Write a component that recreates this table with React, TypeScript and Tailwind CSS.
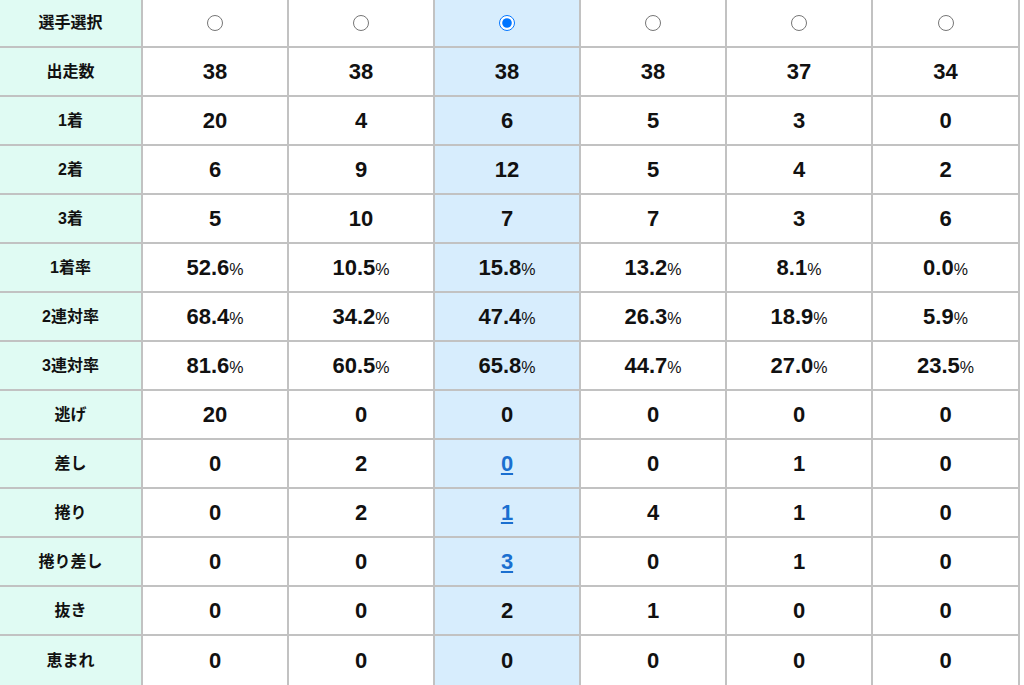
import React, { useState } from "react"

type Cell = string | { link: string }

const rows: { label: string; values: Cell[]; pct?: boolean }[] = [
  { label: "出走数", values: ["38", "38", "38", "38", "37", "34"] },
  { label: "1着", values: ["20", "4", "6", "5", "3", "0"] },
  { label: "2着", values: ["6", "9", "12", "5", "4", "2"] },
  { label: "3着", values: ["5", "10", "7", "7", "3", "6"] },
  { label: "1着率", values: ["52.6", "10.5", "15.8", "13.2", "8.1", "0.0"], pct: true },
  { label: "2連対率", values: ["68.4", "34.2", "47.4", "26.3", "18.9", "5.9"], pct: true },
  { label: "3連対率", values: ["81.6", "60.5", "65.8", "44.7", "27.0", "23.5"], pct: true },
  { label: "逃げ", values: ["20", "0", "0", "0", "0", "0"] },
  { label: "差し", values: ["0", "2", { link: "0" }, "0", "1", "0"] },
  { label: "捲り", values: ["0", "2", { link: "1" }, "4", "1", "0"] },
  { label: "捲り差し", values: ["0", "0", { link: "3" }, "0", "1", "0"] },
  { label: "抜き", values: ["0", "0", "2", "1", "0", "0"] },
  { label: "恵まれ", values: ["0", "0", "0", "0", "0", "0"] },
]

const font = { fontFamily: '"Liberation Sans", "Noto Sans CJK JP", Arial, sans-serif' }

export default function App() {
  const [selected, setSelected] = useState(2)

  const cellBg = (i: number) => (i === selected ? "bg-[#d7edfd]" : "bg-white")

  return (
    <div className="w-[1024px] h-[685px] overflow-hidden bg-white" style={font}>
      <table className="table-fixed border-collapse w-[1020px] -mt-[3px] -ml-[2px]">
        <colgroup>
          <col className="w-[143px]" />
          <col className="w-[146px]" />
          <col className="w-[146px]" />
          <col className="w-[146px]" />
          <col className="w-[146px]" />
          <col className="w-[146px]" />
          <col className="w-[147px]" />
        </colgroup>
        <tbody>
          <tr className="h-[49px]">
            <th className="border-2 border-[#c2c2c2] bg-[#e0fbf3] text-[16px] font-bold text-[#111]">
              選手選択
            </th>
            {[0, 1, 2, 3, 4, 5].map((i) => (
              <td key={i} className={`border-2 border-[#c2c2c2] text-center ${cellBg(i)}`}>
                <input
                  type="radio"
                  name="player"
                  checked={selected === i}
                  onChange={() => setSelected(i)}
                  className="m-0 w-[16px] h-[16px] align-middle"
                />
              </td>
            ))}
          </tr>
          {rows.map((row, r) => (
            <tr key={row.label} className={r === rows.length - 1 ? "h-[51px]" : "h-[49px]"}>
              <th className="border-2 border-[#c2c2c2] bg-[#e0fbf3] text-[16px] font-bold text-[#111]">
                {row.label}
              </th>
              {row.values.map((v, i) => (
                <td
                  key={i}
                  className={`border-2 border-[#c2c2c2] text-center text-[22px] font-bold text-[#111] ${cellBg(i)}`}
                >
                  {typeof v === "string" ? (
                    <>
                      {v}
                      {row.pct && <span className="text-[16px] font-normal">%</span>}
                    </>
                  ) : (
                    <a href="#" className="text-[#1a6fd0] underline underline-offset-2">
                      {v.link}
                    </a>
                  )}
                </td>
              ))}
            </tr>
          ))}
        </tbody>
      </table>
    </div>
  )
}
